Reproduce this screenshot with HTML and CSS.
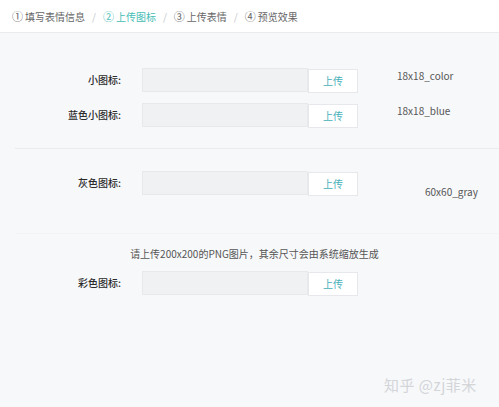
FILE: index.html
```html
<!DOCTYPE html>
<html lang="zh-CN">
<head>
<meta charset="utf-8">
<link rel="stylesheet" href="styles.css">
</head>
<body>
<div class="steps">
  <span class="step"><span class="num">①</span>填写表情信息</span>
  <span class="sep">/</span>
  <span class="step active"><span class="num">②</span>上传图标</span>
  <span class="sep">/</span>
  <span class="step"><span class="num">③</span>上传表情</span>
  <span class="sep">/</span>
  <span class="step"><span class="num">④</span>预览效果</span>
</div>
<div class="main">
  <div class="section sec1">
    <div class="row">
      <div class="label">小图标:</div>
      <div class="field"><div class="input"></div><div class="btn">上传</div></div>
      <div class="note">18x18_color</div>
    </div>
    <div class="row">
      <div class="label">蓝色小图标:</div>
      <div class="field"><div class="input"></div><div class="btn">上传</div></div>
      <div class="note">18x18_blue</div>
    </div>
  </div>
  <div class="section sec2">
    <div class="row">
      <div class="label">灰色图标:</div>
      <div class="field"><div class="input"></div><div class="btn">上传</div></div>
      <div class="note note-low">60x60_gray</div>
    </div>
  </div>
  <div class="section sec3">
    <div class="hint">请上传200x200的PNG图片，其余尺寸会由系统缩放生成</div>
    <div class="row">
      <div class="label">彩色图标:</div>
      <div class="field"><div class="input"></div><div class="btn">上传</div></div>
    </div>
  </div>
</div>
<div class="watermark">知乎 @zj菲米</div>
</body>
</html>
```

FILE: styles.css
```css
html, body {
  margin: 0;
  padding: 0;
}
body {
  width: 499px;
  height: 407px;
  overflow: hidden;
  background: #f7f8fa;
  font-family: "Noto Sans CJK SC", "Noto Sans", sans-serif;
  font-size: 10px;
  color: #555;
  position: relative;
}
.steps {
  height: 32px;
  background: #fff;
  border-bottom: 1px solid #e9ebee;
  display: flex;
  align-items: center;
  padding-left: 12px;
  gap: 7px;
  color: #666;
}
.step {
  display: flex;
  align-items: center;
  gap: 2px;
}
.num {
  font-size: 11px;
}
.step.active {
  color: #45bdb5;
}
.sep {
  color: #c4c8cc;
}
.section {
  margin-left: 15px;
  display: flex;
  flex-direction: column;
}
.sec1 {
  padding-top: 35px;
  padding-bottom: 21px;
  gap: 11px;
  border-bottom: 1px solid #e9ebee;
}
.sec2 {
  padding-top: 22px;
  height: 62px;
  border-bottom: 1px solid #f2f3f6;
}
.sec3 {
  padding-top: 12px;
}
.hint {
  width: 482px;
  text-align: center;
  padding-right: 3px;
  box-sizing: border-box;
  line-height: 16px;
  color: #555;
  margin-bottom: 9px;
}
.row {
  display: flex;
  align-items: flex-start;
  height: 24px;
}
.label {
  width: 106px;
  margin-right: 21px;
  text-align: right;
  line-height: 24px;
  color: #2a2a2a;
  font-weight: 500;
}
.field {
  display: flex;
  height: 24px;
}
.input {
  width: 164px;
  height: 22px;
  background: #eff1f2;
  border: 1px solid #e7e9eb;
}
.btn {
  width: 48px;
  height: 22px;
  margin-top: 1px;
  background: #fff;
  border: 1px solid #e6e8eb;
  color: #45b0b8;
  text-align: center;
  line-height: 22px;
}
.note {
  margin-left: 39px;
  line-height: 16px;
  color: #555;
}
.note-low {
  margin-left: 67px;
  margin-top: 13px;
}
.watermark {
  position: absolute;
  left: 384px;
  top: 374px;
  font-size: 15px;
  line-height: 22px;
  color: #d3d5d9;
  letter-spacing: 0.5px;
}
```
